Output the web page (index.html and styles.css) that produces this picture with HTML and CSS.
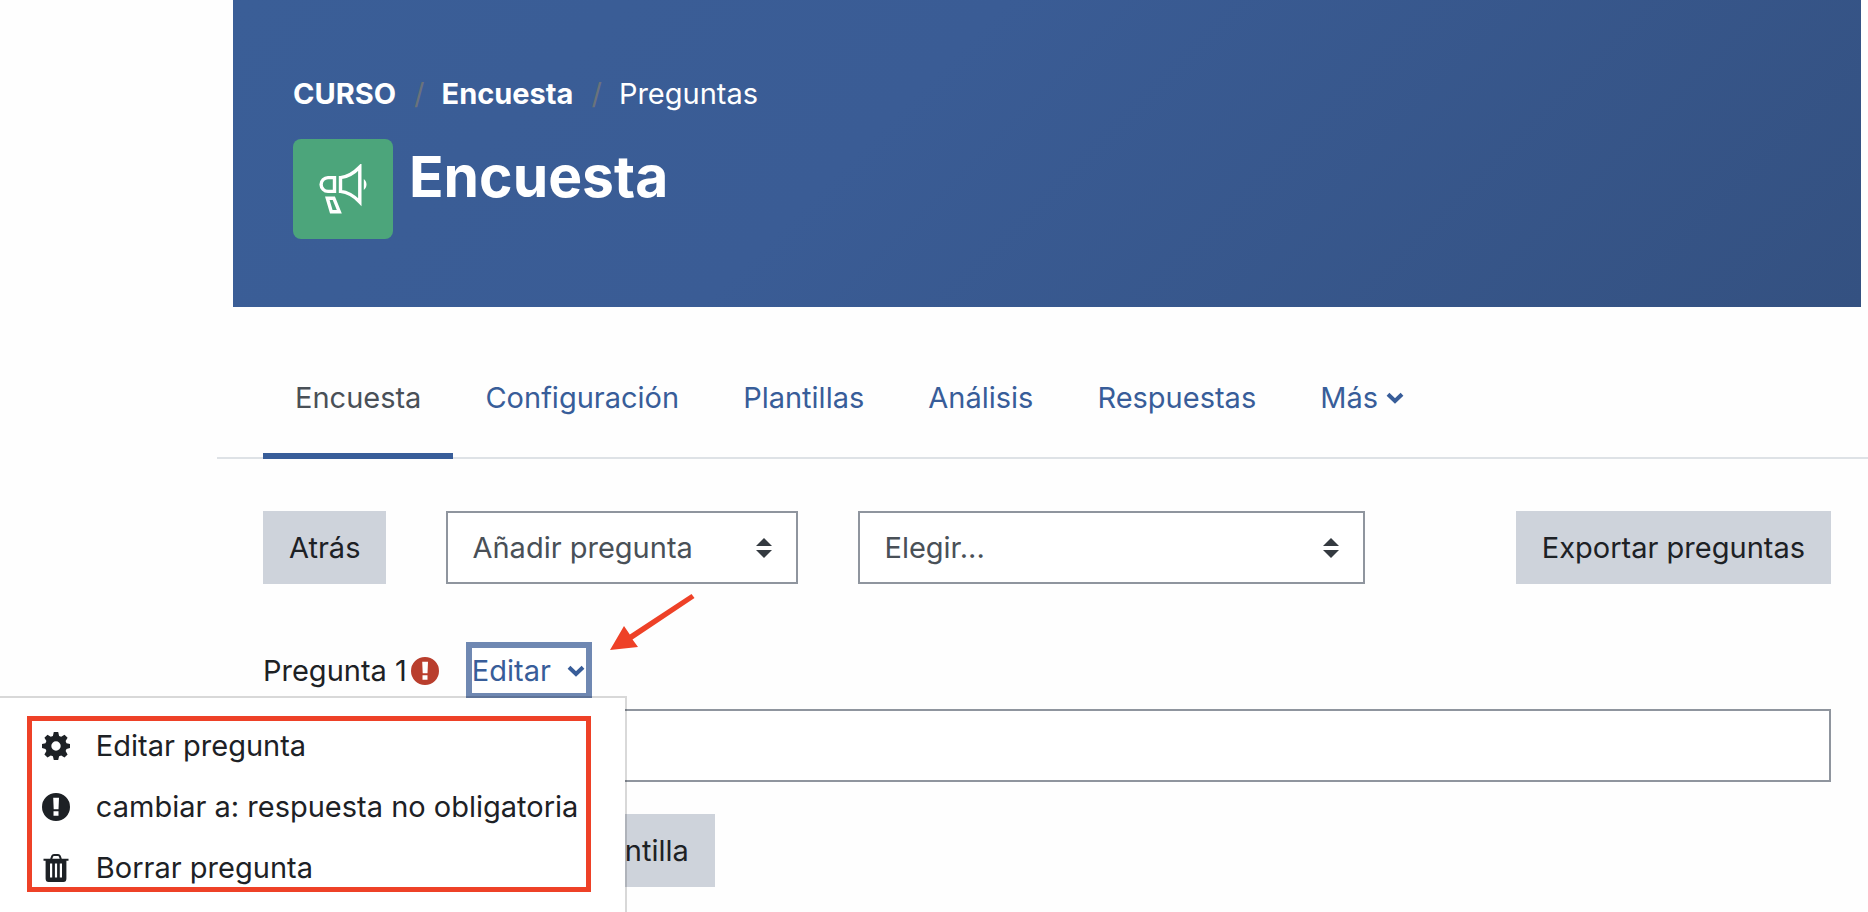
FILE: index.html
```
<!DOCTYPE html>
<html lang="es">
<head>
<meta charset="utf-8">
<title>Encuesta: Preguntas</title>
<link rel="stylesheet" href="styles.css">
</head>
<body>
<svg class="sprite" aria-hidden="true">
  <symbol id="chevron" viewBox="0 0 18 12"><path d="M2 2.300 9 9l7-6.700" fill="none" stroke="currentColor" stroke-width="4"/></symbol>
  <symbol id="carets" viewBox="0 0 16 20"><path d="M8 0l8 8H0zM0 12h16l-8 8z" fill="currentColor"/></symbol>
  <symbol id="alert" viewBox="0 0 28 28"><path fill="currentColor" fill-rule="evenodd" d="M14 0a14 14 0 1 1 0 28a14 14 0 0 1 0-28zM11.200 4.800l.5 11.500h4.800l.5-11.500zM11.500 18.300v4.500h5v-4.500z"/></symbol>
</svg>
<div class="page">
  <header class="hero">
    <nav aria-label="Ruta de navegación">
      <ol class="breadcrumb">
        <li><a href="#curso">CURSO</a></li>
        <li><a href="#encuesta">Encuesta</a></li>
        <li>Preguntas</li>
      </ol>
    </nav>
    <div class="heading">
      <span class="activity">
        <svg width="50" height="50" viewBox="0 0 50 50" fill="none" stroke="#fff" stroke-width="3.400">
          <path d="M16.500 13.600v13.800h-6.500a6.900 6.900 0 0 1 0-13.800z"/>
          <path d="M22.500 13.600v13.800C31 28.200 36.500 32.500 41.800 38V3C36.500 8.500 31 12.800 22.500 13.600z"/>
          <path d="M9.300 34.200h6.500l5.500 13.500h-8z"/>
          <path d="M45.800 15c3.600 3 3.600 8 0 11z" fill="#fff" stroke="none"/>
        </svg>
      </span>
      <h1>Encuesta</h1>
    </div>
  </header>

  <nav aria-label="Secciones">
    <ul class="tabs">
      <li><a class="tab active" href="#encuesta" aria-current="page">Encuesta</a></li>
      <li><a class="tab" href="#configuracion">Configuración</a></li>
      <li><a class="tab" href="#plantillas">Plantillas</a></li>
      <li><a class="tab" href="#analisis">Análisis</a></li>
      <li><a class="tab" href="#respuestas">Respuestas</a></li>
      <li><a class="tab more" href="#mas">Más <svg class="chevron" aria-hidden="true"><use href="#chevron"/></svg></a></li>
    </ul>
  </nav>

  <main class="content">
    <div class="toolbar">
      <button class="btn" type="button">Atrás</button>
      <div class="select add">
        <select aria-label="Añadir pregunta"><option>Añadir pregunta</option></select>
        <svg class="carets" aria-hidden="true"><use href="#carets"/></svg>
      </div>
      <div class="select choose">
        <select aria-label="Elegir"><option>Elegir...</option></select>
        <svg class="carets" aria-hidden="true"><use href="#carets"/></svg>
      </div>
      <button class="btn export" type="button">Exportar preguntas</button>
    </div>

    <div class="question">
      <div class="question-head">
        <label for="respuesta">Pregunta 1</label>
        <svg class="icon required" role="img" aria-label="Obligatoria"><use href="#alert"/></svg>
        <div class="dropdown">
          <button class="toggle" type="button" aria-expanded="true">Editar <svg class="chevron" aria-hidden="true"><use href="#chevron"/></svg></button>
          <svg class="arrow" width="86" height="58" viewBox="0 0 86 58" aria-hidden="true">
            <path d="M0 57 14 33l5.800 8.500L81.500 1l3 4L22.500 46.500l5.500 7.500z" fill="#ee4127"/>
          </svg>
          <div class="menu">
            <a class="item" href="#editar">
              <svg class="icon" viewBox="0 0 28 28" aria-hidden="true"><path fill="currentColor" fill-rule="evenodd" d="M11.800 0h4.400l.9 3.900 2.100.9 3.300-2.100 3.100 3.100-2 3.300.9 2.100 3.500.7v4.200l-3.500.8-.9 2.200 2 3.300-3.100 3-3.300-2-2.100.8-.9 3.800h-4.400l-.9-3.800-2.100-.8-3.300 2-3.100-3 2-3.300-.9-2.200L0 16.100v-4.200l3.500-.7.9-2.100-2-3.300 3.100-3.100 3.300 2.100 2.100-.9zM14 9.300a4.700 4.700 0 1 0 0 9.400a4.700 4.700 0 0 0 0-9.400z"/></svg>
              Editar pregunta
            </a>
            <a class="item" href="#opcional">
              <svg class="icon" aria-hidden="true"><use href="#alert"/></svg>
              cambiar a: respuesta no obligatoria
            </a>
            <a class="item" href="#borrar">
              <svg class="icon" viewBox="0 0 28 28" aria-hidden="true"><path fill="none" stroke="currentColor" stroke-width="2" d="M1.500 5.800h25M9 5.500l1.200-3.300q.5-1.200 1.800-1.200h4q1.300 0 1.800 1.200L19 5.500"/><path fill="currentColor" fill-rule="evenodd" d="M3.600 6h20.800v18.500q0 3.500-3 3.500H6.600q-3 0-3-3.500zM8 9.500v14h2.200v-14zM12.900 9.500v14h2.200v-14zM17.800 9.500v14H20v-14z"/></svg>
              Borrar pregunta
            </a>
            <div class="highlight"></div>
          </div>
        </div>
      </div>
      <input class="field" id="respuesta" type="text">
    </div>

    <button class="btn" type="button">Guardar como nueva plantilla</button>
  </main>
</div>
</body>
</html>
```
FILE: styles.css
```
* { box-sizing: border-box; }

body {
  margin: 0;
  background: #fefefe;
  color: #1d2125;
  font: 29px/45px Inter, "Liberation Sans", sans-serif;
}

a { color: inherit; text-decoration: none; }
button, select, input { font: inherit; color: inherit; border-radius: 0; }
ul, ol { list-style: none; margin: 0; padding: 0; }
.sprite { display: none; }

.page {
  min-height: 100vh;
  padding-left: 217px;
  overflow: hidden;
}

/* Banner */
.hero {
  margin: 0 7px 0 16px;
  padding: 71px 60px 68px;
  color: #fff;
  background: linear-gradient(135deg, #3a5e97 0%, #3a5c95 40%, #345181 100%);
}
.breadcrumb { display: flex; margin-bottom: 23px; }
.breadcrumb a { font-weight: 700; }
.breadcrumb li + li::before {
  content: "/";
  padding: 0 17px 0 18px;
  color: #6a737b;
}
.heading { display: flex; gap: 16px; }
.activity {
  display: flex;
  align-items: center;
  justify-content: center;
  width: 100px;
  height: 100px;
  border-radius: 8px;
  background: #4ca57b;
}
h1 { margin: 0; font-size: 57px; line-height: 76px; font-weight: 700; }

/* Tabs */
.tabs {
  display: flex;
  margin-top: 32px;
  padding-left: 46px;
  border-bottom: 2px solid #dee2e6;
}
.tab {
  display: block;
  margin-bottom: -2px;
  padding: 36px 32px 33px;
  border-bottom: 6px solid transparent;
  color: #385d99;
}
.tab.active { color: #495057; border-color: #385d99; }
.tab.more { display: flex; align-items: center; gap: 8px; }
.chevron { width: 18px; height: 12px; }

/* Content */
.content { padding: 52px 37px 25px 46px; }
.toolbar { display: flex; gap: 60px; }
.btn {
  padding: 14px 26px;
  border: 0;
  background: #ced3db;
}
.export { margin-left: auto; }
.select { position: relative; }
.add { flex: 0 1 352px; }
.choose { flex: 0 1 507px; }
select {
  appearance: none;
  width: 100%;
  height: 73px;
  padding: 0 60px 0 24px;
  border: 2px solid #8f959e;
  background: #fff;
  color: #495057;
}
.carets {
  position: absolute;
  right: 26px;
  top: 27px;
  width: 16px;
  height: 20px;
  color: #343a40;
  pointer-events: none;
}

.question { margin: 64px 0 32px; }
.question-head { display: flex; align-items: center; margin-bottom: 16px; }
.icon { width: 28px; height: 28px; flex: none; }
.required { margin-left: 4px; color: #b93e2d; }
.dropdown { position: relative; margin-left: 33px; }
.toggle {
  display: flex;
  align-items: center;
  gap: 16px;
  padding: 0 1px 0 0;
  border: 0;
  background: #fff;
  color: #385d99;
  box-shadow: 0 0 0 6px #6f88b2;
}
.arrow { position: absolute; left: 138px; bottom: 42px; }
.menu {
  position: absolute;
  top: 48px;
  right: -41px;
  width: 657px;
  padding: 17px 0 19px;
  border: 2px solid rgba(0, 0, 0, .15);
  background: #fff;
  background-clip: padding-box;
}
.item {
  display: flex;
  align-items: center;
  gap: 26px;
  padding: 8px 32px 8px 70px;
}
.highlight {
  position: absolute;
  inset: 18px 34px 25px 55px;
  border: 5px solid #ee4127;
}
.field {
  display: block;
  width: 100%;
  height: 73px;
  padding: 0 24px;
  border: 2px solid #8f959e;
  background: #fff;
}
```
